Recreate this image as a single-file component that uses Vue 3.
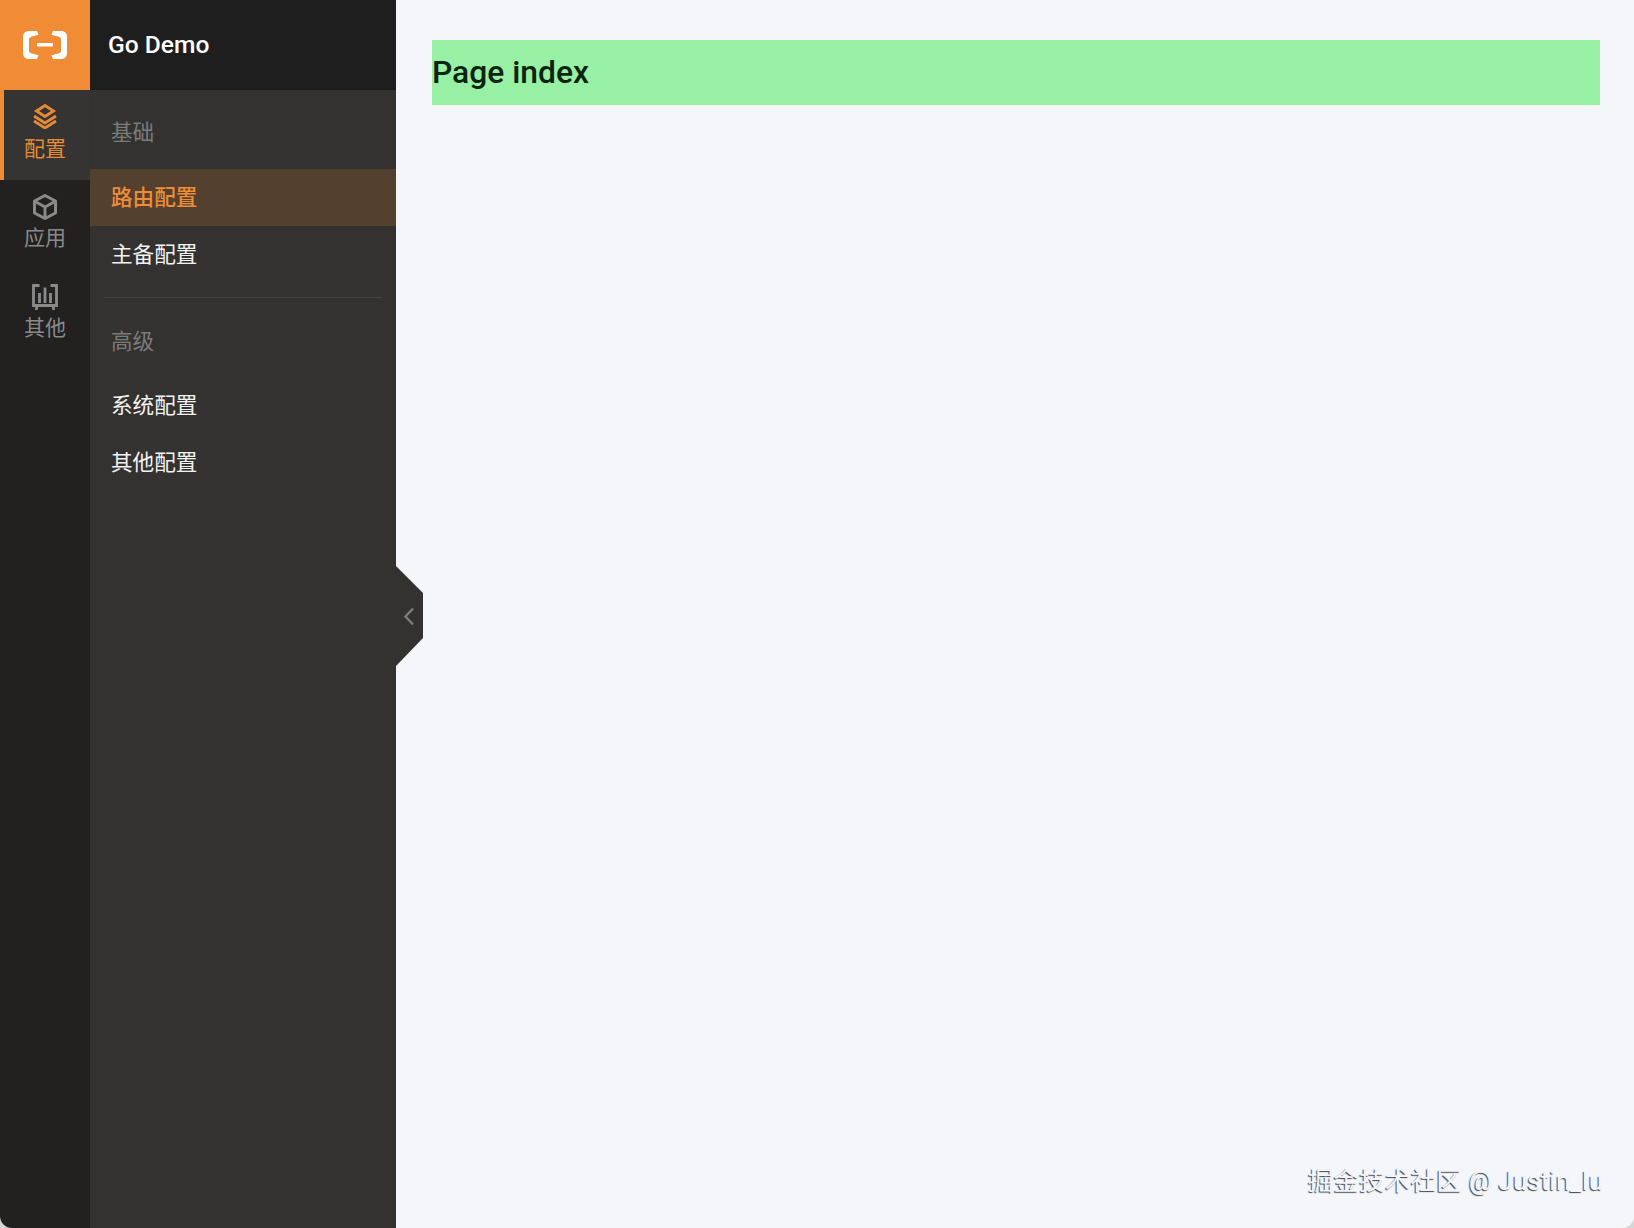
<script setup>
const tabs = [
  { key: 'config', label: '配置', active: true },
  { key: 'app', label: '应用' },
  { key: 'other', label: '其他' }
]

const groups = [
  { title: '基础', items: [{ label: '路由配置', active: true }, { label: '主备配置' }] },
  { title: '高级', items: [{ label: '系统配置' }, { label: '其他配置' }] }
]
</script>

<template>
  <div class="layout">
    <aside class="sider">
      <header class="brand">
        <div class="logo">
          <svg width="46" height="28" viewBox="0 0 46 28" fill="#fff">
            <path d="M15 0H7C3 0 1 2.400 1 6v16c0 3.600 2 6 6 6h8l1.600-3.800-6.800-1.600C8.400 22.200 7 21.400 7 19.800V8.200c0-1.600 1.400-2.400 2.800-2.800l6.800-1.600z" />
            <path d="M31 0h8c4 0 6 2.400 6 6v16c0 3.600-2 6-6 6h-8l-1.600-3.800 6.800-1.600c1.400-.4 2.800-1.200 2.800-2.800V8.200c0-1.600-1.400-2.400-2.800-2.800l-6.800-1.600z" />
            <rect x="15" y="12" width="16" height="3.500" rx="1" />
          </svg>
        </div>
        <span class="title">Go Demo</span>
      </header>
      <div class="sider-body">
        <nav class="tabs">
          <div v-for="tab in tabs" :key="tab.key" class="tab" :class="{ active: tab.active }">
            <svg v-if="tab.key === 'config'" width="26" height="26" viewBox="0 0 26 26" fill="none" stroke="currentColor" stroke-width="2.800">
              <path d="M13 2.500 21.500 8 13 13.500 4.500 8z" />
              <path d="M2 13l11 7 11-7" />
              <path d="M2 18l11 7 11-7" />
            </svg>
            <svg v-else-if="tab.key === 'app'" width="26" height="26" viewBox="0 0 26 26" fill="none" stroke="currentColor" stroke-width="3" stroke-linejoin="round">
              <path d="M13 1.500 23.500 7v12L13 24.500 2.500 19V7z" />
              <path d="M3 7.500 13 13l10-5.500M13 13v11" />
            </svg>
            <svg v-else width="26" height="26" viewBox="0 0 26 26" fill="none" stroke="currentColor" stroke-width="2.800">
              <path d="M7.500 1.500h-6v20h23v-20h-6" />
              <path d="M7.500 9v10M13 3.500V19M18.500 9v10" stroke-width="2.800" />
              <path d="M4.500 21v5M21.500 21v5" />
            </svg>
            <span class="tab-label">{{ tab.label }}</span>
          </div>
        </nav>
        <div class="menu">
          <section v-for="group in groups" :key="group.title" class="group">
            <div class="group-title">{{ group.title }}</div>
            <div v-for="item in group.items" :key="item.label" class="item" :class="{ active: item.active }">
              {{ item.label }}
            </div>
          </section>
        </div>
      </div>
      <div class="collapse">
        <svg width="12" height="19" viewBox="0 0 12 19" fill="none" stroke="#7d7d7d" stroke-width="2.400">
          <path d="M10 1.500 2.500 9.500l7.500 8" />
        </svg>
      </div>
    </aside>
    <main class="content">
      <div class="page">Page index</div>
    </main>
    <div class="watermark">掘金技术社区 @ Justin_lu</div>
  </div>
</template>

<style>
html,
body {
  margin: 0;
  background: #d6d6d6;
}
</style>

<style scoped>
.layout {
  position: relative;
  display: flex;
  height: 1228px;
  overflow: hidden;
  background: #f4f6fa;
  border-radius: 0 0 12px 12px;
  font-family: Roboto, "Noto Sans CJK SC", sans-serif;
}

.sider {
  position: relative;
  display: flex;
  flex-direction: column;
  flex: none;
  width: 396px;
}

.brand {
  display: flex;
  align-items: center;
  flex: none;
  height: 90px;
  background: #1f1e1e;
}

.logo {
  display: flex;
  align-items: center;
  justify-content: center;
  width: 90px;
  height: 90px;
  background: #f08c35;
}

.title {
  margin: 0 0 2px 18px;
  color: #fff;
  font-size: 24.600px;
  font-weight: 500;
}

.sider-body {
  display: flex;
  flex: 1;
}

.tabs {
  flex: none;
  width: 90px;
  background: #222120;
}

.tab {
  display: flex;
  flex-direction: column;
  align-items: center;
  box-sizing: border-box;
  height: 90px;
  padding-top: 14px;
  color: #8a8a8a;
}

.tab.active {
  padding-top: 13px;
  border-left: 4px solid #f08c35;
  background: #353433;
  color: #e58a37;
}

.tab.active svg,
.tab.active .tab-label {
  margin-left: -4px;
}

.tab-label {
  margin-top: 4px;
  font-size: 21px;
  line-height: 28px;
}

.tab.active .tab-label {
  margin-top: 6px;
}

.menu {
  flex: 1;
  background: #333231;
}

.group + .group {
  margin: 14px 14px 0;
  border-top: 1px solid #444342;
}

.group + .group .group-title {
  padding-left: 7px;
  line-height: 87px;
}

.group + .group .item {
  padding-left: 7px;
}

.group-title {
  box-sizing: border-box;
  height: 79px;
  padding-left: 21px;
  color: #7b7b7b;
  font-size: 21.600px;
  line-height: 85px;
}

.item {
  height: 57px;
  padding-left: 21px;
  color: #f2f2f2;
  font-size: 21.600px;
  line-height: 57px;
}

.item.active {
  background: #54402f;
  color: #ee8c38;
  font-weight: 500;
}

.collapse {
  position: absolute;
  top: 566px;
  left: 100%;
  display: flex;
  align-items: center;
  box-sizing: border-box;
  width: 27px;
  height: 100px;
  padding-left: 7px;
  background: #333231;
  clip-path: polygon(0 0, 100% 27px, 100% 72px, 0 100%);
}

.content {
  flex: 1;
  padding: 40px 34px 0 36px;
}

.page {
  height: 65px;
  background: #98f0a4;
  color: #0d2412;
  font-size: 31.800px;
  font-weight: 500;
  line-height: 65px;
}

.watermark {
  position: absolute;
  right: 31px;
  bottom: 31px;
  color: #f4f6fa;
  font-size: 25.300px;
  line-height: 30px;
  letter-spacing: 0.4px;
  text-shadow: -1px 1px 1px #444;
}
</style>
